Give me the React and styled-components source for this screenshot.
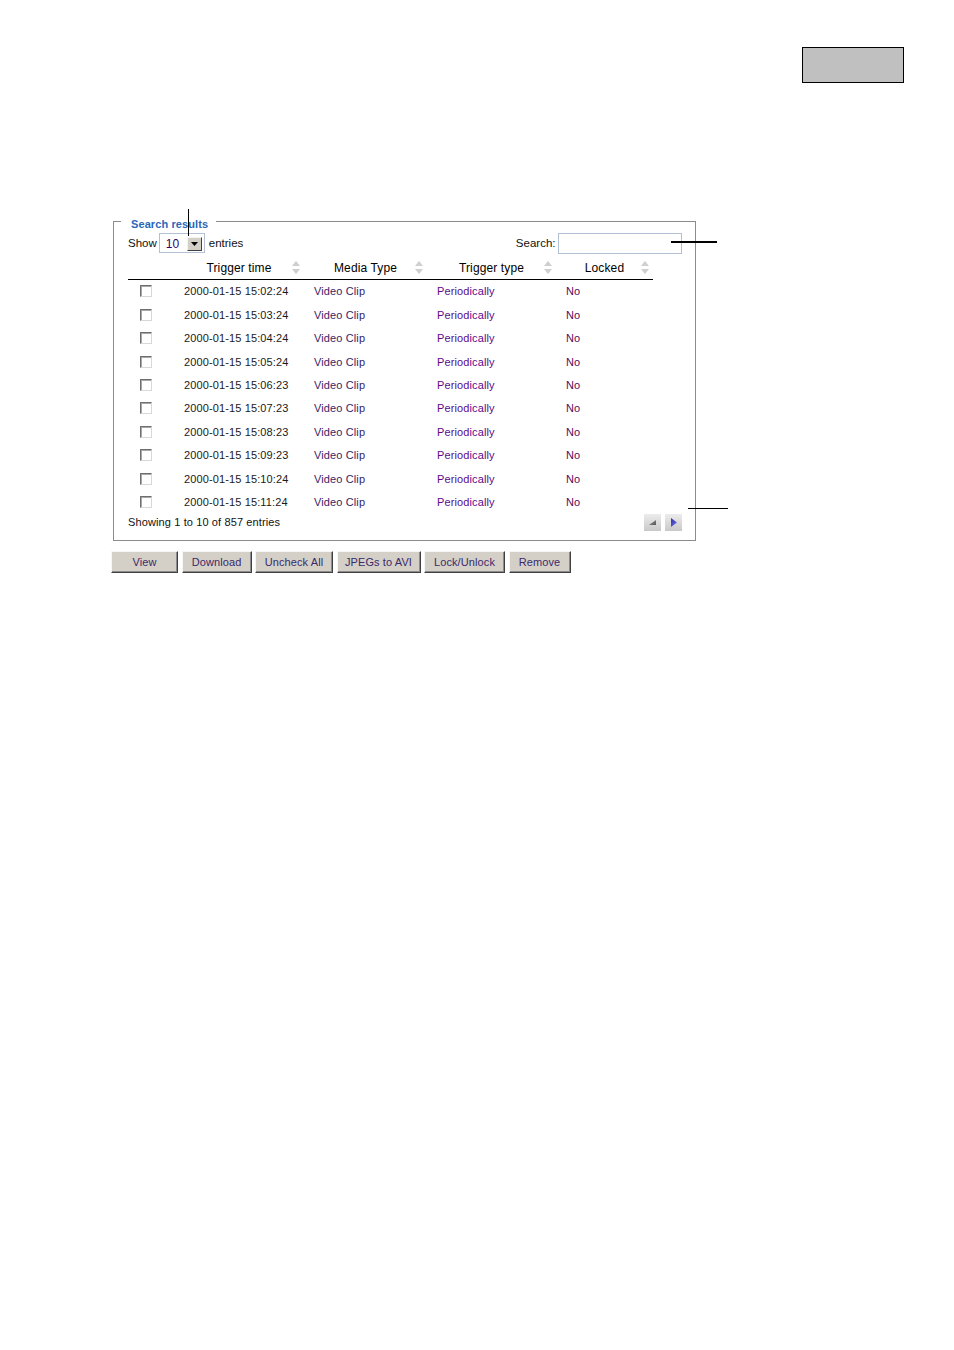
import React from "react";
import styled, { createGlobalStyle } from "styled-components";

const Global = createGlobalStyle`
  html, body { margin: 0; padding: 0; background: #fff; }
  body { font-family: "Liberation Sans", Arial, sans-serif; }
  * { box-sizing: border-box; }
`;

const Page = styled.div`
  position: relative;
  width: 954px;
  min-height: 1350px;
  padding-top: 47px;
  font-family: "Liberation Sans", Arial, sans-serif;
`;

const TopBar = styled.div`
  display: flex;
  justify-content: flex-end;
  padding-right: 50px;
`;

const GreyBox = styled.div`
  width: 102px;
  height: 36px;
  background: #c0c0c0;
  border: 1.5px solid #000;
`;

const Fieldset = styled.fieldset`
  margin: 129.5px 0 0 113px;
  width: 582.5px;
  border: 1px solid #8c8c8c;
  padding: 2px 13px 9px 14px;
  min-width: 0;
`;

const Legend = styled.legend`
  margin-left: -7px;
  padding: 4px 8px 0 10px;
  font-size: 11px;
  line-height: 14px;
  font-weight: bold;
  color: #2b67b8;
  letter-spacing: 0.1px;
`;

const Controls = styled.div`
  display: flex;
  align-items: center;
  justify-content: space-between;
  height: 21px;
  font-size: 11.5px;
  color: #111;
`;

const Group = styled.div`
  display: flex;
  align-items: center;
  gap: ${(p) => p.$gap || 2}px;
`;

const SelectBox = styled.div`
  width: 46px;
  height: 20px;
  border: 1px solid #b4c0d4;
  background: #fff;
  display: flex;
  align-items: center;
  justify-content: space-between;
  padding: 2px 2px 0 6px;
  margin-right: 2px;
  font-size: 12px;
  color: #330066;
`;

const DropBtn = styled.div`
  width: 15px;
  height: 14px;
  background: #d4d0c8;
  border: 1px solid;
  border-color: #f4f4f4 #404040 #404040 #f4f4f4;
  display: flex;
  align-items: center;
  justify-content: center;
  margin-top: -1px;
`;

const SearchInput = styled.div`
  width: 124px;
  height: 21px;
  border: 1px solid #b4c0d4;
  background: #fff;
`;

const Table = styled.table`
  width: 525px;
  margin-top: 2px;
  border-collapse: collapse;
  table-layout: fixed;
  font-size: 11px;
  letter-spacing: 0.12px;
`;

const Th = styled.th`
  height: 24px;
  padding: 0;
  border-bottom: 1px solid #000;
  font-weight: normal;
  font-size: 12px;
  color: #000;
  width: ${(p) => p.$w}px;
`;

const ThInner = styled.div`
  display: flex;
  align-items: center;
  padding: 1px 4px 0 12px;
`;

const ThLabel = styled.span`
  flex: 1;
  text-align: center;
`;

const Td = styled.td`
  height: 23.44px;
  padding: 0 0 0 ${(p) => p.$pl ?? 10}px;
  color: ${(p) => p.$color || "#1a1a1a"};
  white-space: nowrap;
`;

const Check = styled.div`
  width: 12px;
  height: 12px;
  border: 1px solid;
  border-color: #6e6e6e #d8d8d8 #d8d8d8 #6e6e6e;
  background: #fff;
  box-shadow: inset 1px 1px 0 #a8a8a8;
`;

const Footer = styled.div`
  display: flex;
  align-items: center;
  justify-content: space-between;
  height: 17px;
  font-size: 11px;
  letter-spacing: 0.12px;
  color: #111;
`;

const PagerGroup = styled.div`
  display: flex;
  gap: 4px;
`;

const PagerBtn = styled.div`
  width: 17px;
  height: 17px;
  background: linear-gradient(#ececec, #c9c9c9);
  display: flex;
  align-items: center;
  justify-content: center;
`;

const ButtonRow = styled.div`
  display: flex;
  gap: 3.5px;
  margin: 10px 0 0 111px;
`;

const Button = styled.div`
  width: ${(p) => p.$w}px;
  height: 22px;
  background: #d4d0c8;
  border: 1px solid;
  border-color: #f6f6f6 #404040 #404040 #f6f6f6;
  box-shadow: inset -1px -1px 0 #8c8c8c;
  display: flex;
  align-items: center;
  justify-content: center;
  font-size: 11px;
  letter-spacing: 0.1px;
  color: #3a2a6a;
`;

const Line = styled.div`
  position: absolute;
  background: #000;
  left: ${(p) => p.$x}px;
  top: ${(p) => p.$y}px;
  width: ${(p) => p.$w}px;
  height: ${(p) => p.$h}px;
`;

const SortIcon = () => (
  <svg width="8" height="13" viewBox="0 0 8 13">
    <polygon points="4,0 8,5 0,5" fill="#cfcfcf" />
    <polygon points="0,8 8,8 4,13" fill="#cfcfcf" />
  </svg>
);

const columns = [
  { label: "", w: 46 },
  { label: "Trigger time", w: 130 },
  { label: "Media Type", w: 123 },
  { label: "Trigger type", w: 129 },
  { label: "Locked", w: 97 },
];

const times = [
  "15:02:24",
  "15:03:24",
  "15:04:24",
  "15:05:24",
  "15:06:23",
  "15:07:23",
  "15:08:23",
  "15:09:23",
  "15:10:24",
  "15:11:24",
];

const buttons = [
  { label: "View", w: 67 },
  { label: "Download", w: 70 },
  { label: "Uncheck All", w: 78 },
  { label: "JPEGs to AVI", w: 84 },
  { label: "Lock/Unlock", w: 81 },
  { label: "Remove", w: 62 },
];

export default function App() {
  return (
    <Page>
      <Global />
      <TopBar>
        <GreyBox />
      </TopBar>
      <Fieldset>
        <Legend>Search results</Legend>
        <Controls>
          <Group $gap={2}>
            <span>Show</span>
            <SelectBox>
              <span>10</span>
              <DropBtn>
                <svg width="7" height="4" viewBox="0 0 7 4">
                  <polygon points="0,0 7,0 3.5,4" fill="#000" />
                </svg>
              </DropBtn>
            </SelectBox>
            <span>entries</span>
          </Group>
          <Group $gap={2}>
            <span>Search:</span>
            <SearchInput />
          </Group>
        </Controls>
        <Table>
          <thead>
            <tr>
              {columns.map((c, i) => (
                <Th key={i} $w={c.w}>
                  {c.label && (
                    <ThInner>
                      <ThLabel>{c.label}</ThLabel>
                      <SortIcon />
                    </ThInner>
                  )}
                </Th>
              ))}
            </tr>
          </thead>
          <tbody>
            {times.map((t) => (
              <tr key={t}>
                <Td $pl={12}>
                  <Check />
                </Td>
                <Td>2000-01-15 {t}</Td>
                <Td $color="#3a1d66">Video Clip</Td>
                <Td $color="#5c0a8a">Periodically</Td>
                <Td $color="#5a0a5a">No</Td>
              </tr>
            ))}
          </tbody>
        </Table>
        <Footer>
          <span>Showing 1 to 10 of 857 entries</span>
          <PagerGroup>
            <PagerBtn>
              <svg width="17" height="17" viewBox="0 0 17 17">
                <defs>
                  <linearGradient id="pg" x1="0" y1="0" x2="1" y2="1">
                    <stop offset="0" stopColor="#9a9a9a" />
                    <stop offset="1" stopColor="#555" />
                  </linearGradient>
                </defs>
                <polygon points="5,11 12,6 12,11" fill="url(#pg)" />
              </svg>
            </PagerBtn>
            <PagerBtn>
              <svg width="17" height="17" viewBox="0 0 17 17">
                <defs>
                  <linearGradient id="ng" x1="0" y1="0" x2="1" y2="1">
                    <stop offset="0" stopColor="#2a2aa8" />
                    <stop offset="1" stopColor="#7a7ae8" />
                  </linearGradient>
                </defs>
                <polygon points="6,4 12,8.5 6,13" fill="url(#ng)" />
              </svg>
            </PagerBtn>
          </PagerGroup>
        </Footer>
      </Fieldset>
      <ButtonRow>
        {buttons.map((b) => (
          <Button key={b.label} $w={b.w}>
            {b.label}
          </Button>
        ))}
      </ButtonRow>
      <Line $x={188} $y={209} $w={1} $h={27} />
      <Line $x={671} $y={241} $w={46} $h={1.5} />
      <Line $x={688} $y={508} $w={40} $h={1} />
    </Page>
  );
}
